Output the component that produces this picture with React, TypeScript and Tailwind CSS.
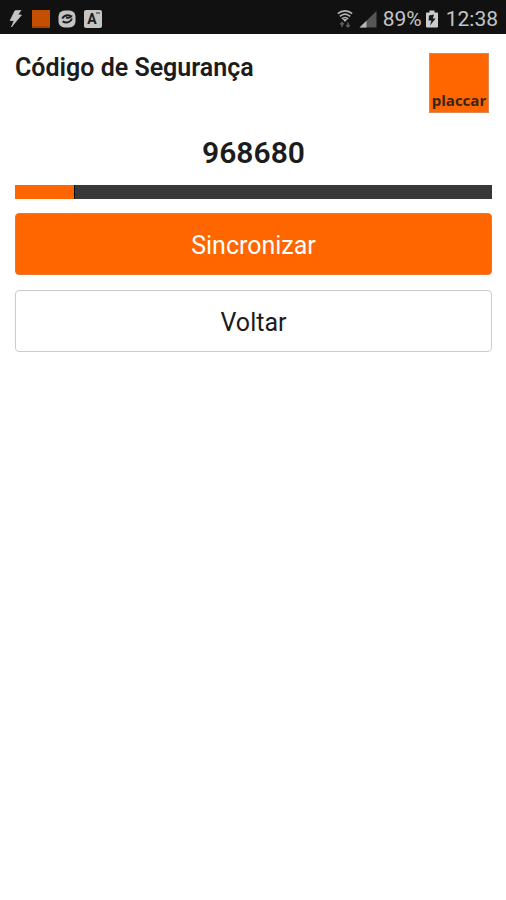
const STEP_SECONDS = 30;

function BoltIcon() {
  return (
    <svg viewBox="0 0 14 18" className="h-[18px] w-3.5" fill="#c4c4c4" aria-hidden="true">
      <path d="M7 0.8 L12.8 0.4 L9.8 4.8 L13.4 5 L3.4 17 L6.2 10.8 L2.2 10.4 Z" stroke="#c4c4c4" strokeWidth="0.8" />
    </svg>
  );
}

function SyncBadgeIcon() {
  return (
    <svg viewBox="0 0 18 18" className="size-[18px]" aria-hidden="true">
      <rect x="0.5" y="0.5" width="17" height="17" rx="6" fill="#c4c4c4" />
      <path d="M4.2 8.4 C6 5.6 9.4 4.4 13.4 6.2 C11.8 8.2 10 8.2 8 7.6" fill="none" stroke="#1c1c1c" strokeWidth="1.8" />
      <path d="M14 8.6 C13 12.2 8.6 13.6 4.6 11.4" fill="none" stroke="#1c1c1c" strokeWidth="1.8" />
    </svg>
  );
}

function WifiIcon() {
  return (
    <svg viewBox="0 0 16 18" className="h-[18px] w-4" fill="none" stroke="#b4b4b4" strokeWidth="1.6" aria-hidden="true">
      <path d="M0.8 3.6 C5 0 11 0 15.2 3.6" />
      <path d="M2.8 6.4 C6 3.6 10 3.6 13.2 6.4" />
      <path d="M4.8 8.8 C7 7 9 7 11.2 8.8" />
      <path d="M5.6 9 H10.4 L8 12 Z" fill="#b4b4b4" stroke="none" />
      <path d="M5 17 V12.5 M3.2 14.4 L5 12.6 L6.8 14.4 M11 12.5 V17 M9.2 15 L11 16.8 L12.8 15" stroke="#5c5c5c" />
    </svg>
  );
}

function SignalIcon() {
  return (
    <svg viewBox="0 0 18 18" className="size-[18px]" aria-hidden="true">
      <path d="M0.5 17.5 L17.5 1 V17.5 Z" fill="#555555" />
      <path d="M0.5 17.5 L7.5 10.7 V17.5 Z" fill="#b8b8b8" />
    </svg>
  );
}

function BatteryIcon() {
  return (
    <svg viewBox="0 0 12 18" className="h-[18px] w-3" aria-hidden="true">
      <path d="M3.5 0.5 H8.5 V2.5 H11 Q12 2.5 12 3.5 V16.5 Q12 17.5 11 17.5 H1 Q0 17.5 0 16.5 V3.5 Q0 2.5 1 2.5 H3.5 Z" fill="#cccccc" />
      <path d="M8 4.6 L3 5.4 L2.6 10.6 H5.4 L4 15.5 L9.6 8.6 H6.8 Z" fill="#181818" />
    </svg>
  );
}

function StatusBar() {
  return (
    <div className="flex h-[34px] items-center justify-between bg-[#111111] px-2 pt-1 text-[#c4c4c4]">
      <div className="flex items-center gap-2">
        <BoltIcon />
        <span className="ml-0.5 size-[18px] border-b-2 border-[#a84200] bg-[#c44e02]" />
        <SyncBadgeIcon />
        <span className="relative flex size-[18px] items-center justify-center rounded-xs bg-[#c4c4c4] pr-0.5 text-sm/4 font-bold text-[#1c1c1c]">
          A
          <span className="absolute right-0.5 top-0.5 h-0.5 w-1 bg-[#777777]" />
        </span>
      </div>
      <div className="flex items-center">
        <WifiIcon />
        <span className="ml-1.5 flex">
          <SignalIcon />
        </span>
        <span className="ml-1.5 text-[21px]/8">89%</span>
        <span className="ml-1 flex">
          <BatteryIcon />
        </span>
        <span className="ml-2 text-[21px]/8">12:38</span>
      </div>
    </div>
  );
}

function Logo() {
  return (
    <div className="flex size-[60px] items-end justify-center border border-[#d98a58] bg-[#ff6600] text-[15px]/6 font-bold text-[#33271c] font-['Open_Sans',sans-serif]">
      placcar
    </div>
  );
}

function TokenProgress({ elapsed }: { elapsed: number }) {
  return (
    <div
      role="progressbar"
      aria-label="Validade do código"
      aria-valuemin={0}
      aria-valuemax={STEP_SECONDS}
      aria-valuenow={elapsed}
      className="h-3.5 bg-[#383838]"
    >
      <div className="h-full border-r border-black bg-[#ff6600]" style={{ width: `${(elapsed / STEP_SECONDS) * 100}%` }} />
    </div>
  );
}

export default function App() {
  return (
    <div className="min-h-screen bg-white text-[#1c1c1c] font-[Roboto,sans-serif]">
      <StatusBar />
      <main className="pl-[15px] pr-3.5 pt-[19px]">
        <header className="flex items-start justify-between pr-[3px]">
          <h1 className="text-[25px]/[30px] font-semibold">Código de Segurança</h1>
          <Logo />
        </header>
        <p className="mt-5 text-center text-[30px]/10 font-semibold">968680</p>
        <div className="mt-3">
          <TokenProgress elapsed={3.8} />
          <div className="mt-3.5 flex flex-col gap-[15px]">
            <button type="button" className="h-[62px] rounded-sm border border-[#e87830] bg-[#ff6600] pt-1 text-[25px]/8 text-white">
              Sincronizar
            </button>
            <button type="button" className="h-[62px] rounded-sm border border-[#cccccc] bg-white pt-1 text-[25px]/8">
              Voltar
            </button>
          </div>
        </div>
      </main>
    </div>
  );
}
